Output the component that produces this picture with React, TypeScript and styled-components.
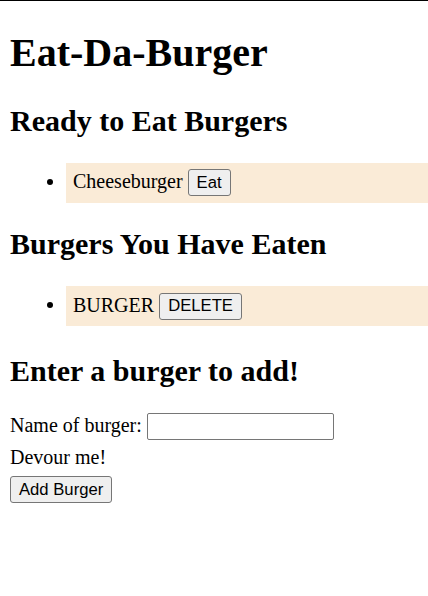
import React from "react";
import styled, { createGlobalStyle } from "styled-components";

const Global = createGlobalStyle`
  html {
    border-top: 1px solid #000;
    background: #fff;
  }
  body {
    margin: 0;
    font-family: "Liberation Serif", "Times New Roman", serif;
    font-size: 20px;
    color: #000;
  }
`;

const Page = styled.main`
  display: block;
  padding: 0 10px 10px;
`;

const Title = styled.h1`
  font-size: 40px;
  font-weight: bold;
  margin: 27.5px 0 28px;
`;

const SectionTitle = styled.h2`
  font-size: 30px;
  font-weight: bold;
  margin: 24.9px 0;
`;

const BurgerList = styled.ul`
  list-style: disc;
  margin: 25px 0 24.9px;
  padding-left: 50px;
`;

const BurgerItem = styled.li`
  background: #faebd7;
  margin: 0 -10px 0 6px;
  padding: 6.5px 7px;
`;

const Button = styled.button`
  font-family: "Liberation Sans", Arial, sans-serif;
  font-size: 16.67px;
  color: #000;
  background: #efefef;
  border: 1px solid #767676;
  border-radius: 3px;
  height: 27px;
  box-sizing: border-box;
  padding: 0 8px;
  margin: 0;
`;

const AddSection = styled.section`
  margin-top: 28px;
`;

const Form = styled.form`
  margin: 0;
`;

const Line = styled.div<{ $gap: number }>`
  line-height: normal;
  margin-bottom: ${(p) => p.$gap}px;
`;

const TextInput = styled.input`
  font-family: "Liberation Sans", Arial, sans-serif;
  font-size: 16.67px;
  width: 187px;
  height: 27px;
  box-sizing: border-box;
  border: 1px solid #767676;
  border-radius: 2px;
  padding: 1px 3px;
  margin: 0;
  vertical-align: baseline;
`;

export default function App() {
  return (
    <>
      <Global />
      <Page>
        <Title>Eat-Da-Burger</Title>
        <SectionTitle>Ready to Eat Burgers</SectionTitle>
        <BurgerList>
          <BurgerItem>
            Cheeseburger <Button>Eat</Button>
          </BurgerItem>
        </BurgerList>
        <SectionTitle>Burgers You Have Eaten</SectionTitle>
        <BurgerList>
          <BurgerItem>
            BURGER <Button>DELETE</Button>
          </BurgerItem>
        </BurgerList>
        <AddSection>
          <SectionTitle>Enter a burger to add!</SectionTitle>
          <Form onSubmit={(e) => e.preventDefault()}>
            <Line $gap={6}>
              Name of burger: <TextInput type="text" />
            </Line>
            <Line $gap={7}>Devour me!</Line>
            <Button type="submit">Add Burger</Button>
          </Form>
        </AddSection>
      </Page>
    </>
  );
}
